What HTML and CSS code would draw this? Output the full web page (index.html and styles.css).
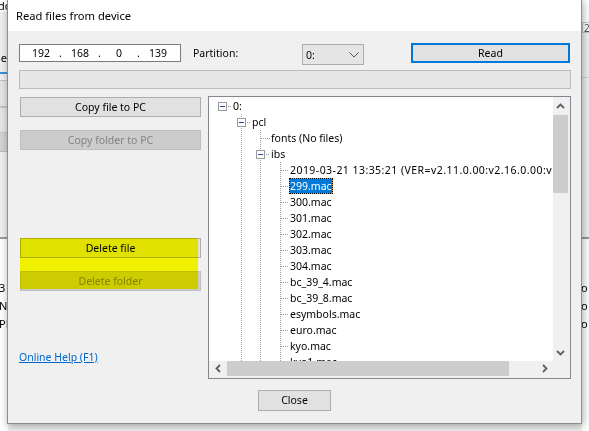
FILE: index.html
```html
<!DOCTYPE html>
<html>
<head>
<meta charset="utf-8">
<title>Read files from device</title>
<link rel="stylesheet" href="styles.css">
</head>
<body>
<div class="bgl">
  <div class="w-top"><span class="clip-l">dd</span></div>
  <div class="g-blk h38"></div>
  <div class="g-txt"><span class="clip-l">le</span></div>
  <div class="g-blk h6"></div>
  <div class="blue"></div>
  <div class="g-blk h6"></div>
  <div class="pbox h27"></div>
  <div class="pbox h26"></div>
  <div class="pbox2"></div>
  <div class="g-fill"></div>
  <div class="sep"></div>
  <div class="w-bot">
    <div class="bt">3</div>
    <div class="bt">N</div>
    <div class="bt">PF</div>
  </div>
</div>
<div class="bgr">
  <div class="w-top r-top"></div>
  <div class="r-cell"><span>2</span></div>
  <div class="g-blk h44"></div>
  <div class="r-line"></div>
  <div class="g-fill"></div>
  <div class="sep"></div>
  <div class="w-bot">
    <div class="bt">o</div>
    <div class="bt">o</div>
    <div class="bt">o</div>
  </div>
</div>

<div class="dialog">
  <div class="titlebar">Read files from device</div>
  <div class="body">
    <div class="row1">
      <div class="ip">
        <span class="oct">192</span><span class="dot">.</span>
        <span class="oct">168</span><span class="dot">.</span>
        <span class="oct">0</span><span class="dot">.</span>
        <span class="oct">139</span>
      </div>
      <span class="lbl">Partition:</span>
      <div class="combo"><span>0:</span><svg width="10" height="6" viewBox="0 0 10 6"><path d="M0.5 0.5 L5 5 L9.5 0.5" fill="none" stroke="#555" stroke-width="1"/></svg></div>
      <div class="btn read">Read</div>
    </div>
    <div class="progress"></div>
    <div class="main">
      <div class="leftcol">
        <div class="btn">Copy file to PC</div>
        <div class="btn dis gap13">Copy folder to PC</div>
        <div class="delgroup">
          <div class="btn">Delete file</div>
          <div class="btn dis gap13">Delete folder</div>
          <div class="hl"></div>
        </div>
        <a class="help" href="#">Online Help (F1)</a>
      </div>
      <div class="tree">
        <div class="view">
          <div class="rows">
            <div class="r l0"><i class="bx"></i><i class="dt"></i><span>0:</span></div>
            <div class="r l1"><i class="bx"></i><i class="dt"></i><span>pcl</span></div>
            <div class="r l2"><i class="ld ld9"></i><span>fonts (No files)</span></div>
            <div class="r l2b"><i class="bx"></i><i class="dt"></i><span>ibs</span></div>
            <div class="r l3"><i class="ld"></i><span class="ver">2019-03-21 13:35:21 (VER=v2.11.0.00:v2.16.0.00:v1.00.00)</span></div>
            <div class="r l3"><i class="ld"></i><span class="sel">299.mac</span></div>
            <div class="r l3"><i class="ld"></i><span>300.mac</span></div>
            <div class="r l3"><i class="ld"></i><span>301.mac</span></div>
            <div class="r l3"><i class="ld"></i><span>302.mac</span></div>
            <div class="r l3"><i class="ld"></i><span>303.mac</span></div>
            <div class="r l3"><i class="ld"></i><span>304.mac</span></div>
            <div class="r l3"><i class="ld"></i><span>bc_39_4.mac</span></div>
            <div class="r l3"><i class="ld"></i><span>bc_39_8.mac</span></div>
            <div class="r l3"><i class="ld"></i><span>esymbols.mac</span></div>
            <div class="r l3"><i class="ld"></i><span>euro.mac</span></div>
            <div class="r l3"><i class="ld"></i><span>kyo.mac</span></div>
            <div class="r l3"><i class="ld"></i><span>kyo1.mac</span></div>
          </div>
        </div>
        <div class="vscroll">
          <div class="arr"><svg width="9" height="6" viewBox="0 0 9 6"><path d="M1 5 L4.5 1.5 L8 5" fill="none" stroke="#606060" stroke-width="1.8"/></svg></div>
          <div class="vtrack"><div class="vthumb"></div></div>
          <div class="arr"><svg width="9" height="6" viewBox="0 0 9 6"><path d="M1 1 L4.5 4.5 L8 1" fill="none" stroke="#606060" stroke-width="1.8"/></svg></div>
        </div>
        <div class="hscroll">
          <div class="harr"><svg width="6" height="9" viewBox="0 0 6 9"><path d="M5 1 L1.5 4.5 L5 8" fill="none" stroke="#606060" stroke-width="1.8"/></svg></div>
          <div class="hthumb"></div>
          <div class="harr end"><svg width="6" height="9" viewBox="0 0 6 9"><path d="M1 1 L4.5 4.5 L1 8" fill="none" stroke="#606060" stroke-width="1.8"/></svg></div>
        </div>
        <div class="corner"></div>
      </div>
    </div>
    <div class="foot"><div class="btn close">Close</div></div>
  </div>
</div>
</body>
</html>
```

FILE: styles.css
```css
* { box-sizing: border-box; }
html, body { margin: 0; padding: 0; }
body {
  width: 589px;
  height: 431px;
  overflow: hidden;
  position: relative;
  background: #f0f0f0;
  font-family: "Noto Sans", "Liberation Sans", sans-serif;
  font-size: 10.5px;
  color: #000;
}

/* ---------- parent window peeking out behind the dialog ---------- */
.bgl, .bgr {
  position: absolute;
  top: 0;
  height: 431px;
  display: flex;
  flex-direction: column;
  overflow: hidden;
  background: #f0f0f0;
}
.bgl { left: 0; width: 8px; }
.bgr { left: 582px; width: 7px; }
.w-top { height: 12px; background: #fff; line-height: 12px; font-size: 11px; white-space: nowrap; }
.r-top { height: 22px; }
.clip-l { display: block; margin-left: -2px; }
.g-blk { flex: none; }
.h38 { height: 38px; }
.h6 { height: 6px; }
.h44 { height: 44px; }
.g-txt { height: 16px; line-height: 16px; font-size: 11px; white-space: nowrap; }
.blue { height: 2px; background: #3a8ee0; flex: none; }
.pbox { flex: none; background: #e6e6e6; border-top: 1px solid #c4c4c4; border-bottom: 1px solid #c4c4c4; }
.h27 { height: 27px; }
.h26 { height: 26px; }
.pbox2 { flex: none; height: 19px; background: #d4d4d4; border-bottom: 1px solid #bdbdbd; }
.r-cell { height: 11px; background: #fff; border: 1px solid #c8c8c8; border-right: 0; line-height: 10px; font-size: 10px; color: #555; padding-left: 1px; }
.r-line { height: 1px; background: #d0d0d0; flex: none; }
.g-fill { flex: 1; }
.sep { height: 2px; background: #9a9a9a; flex: none; }
.w-bot { height: 192px; background: #fff; padding-top: 40px; flex: none; }
.bt { height: 18px; line-height: 18px; font-size: 11px; white-space: nowrap; margin-left: -1px; }

/* ---------- dialog window ---------- */
.dialog {
  position: absolute;
  left: 7px;
  top: -1px;
  width: 575px;
  height: 425px;
  border: 1px solid #8e8e8e;
  background: #f0f0f0;
  box-shadow: 1px 2px 8px rgba(0, 0, 0, 0.35);
}
.titlebar {
  height: 31px;
  background: #fff;
  line-height: 32px;
  padding-left: 8px;
  font-size: 11.2px;
}
.body {
  padding: 12px 10px 0 11px;
  display: flex;
  flex-direction: column;
}

.row1 {
  display: flex;
  align-items: flex-start;
  height: 21px;
}
.ip {
  margin-top: 1px;
  width: 162px;
  height: 18px;
  border: 1px solid #7a7a7a;
  background: #fff;
  display: flex;
  align-items: center;
  padding-left: 4px;
  line-height: 16px;
}
.oct { width: 34px; text-align: center; }
.dot { width: 5px; text-align: center; }
.lbl {
  margin-left: 12px;
  width: 109px;
  line-height: 20px;
}
.combo {
  margin-top: 1px;
  width: 62px;
  height: 21px;
  border: 1px solid #adadad;
  background: #e5e5e5;
  display: flex;
  align-items: center;
  justify-content: space-between;
  padding: 0 4px 0 3px;
}
.combo svg { margin-top: 1px; }

.btn {
  height: 20px;
  border: 1px solid #adadad;
  background: #e1e1e1;
  text-align: center;
  line-height: 18px;
  white-space: nowrap;
}
.btn.read {
  margin-left: 47px;
  width: 159px;
  border: 2px solid #0078d7;
  line-height: 16px;
}
.btn.dis {
  background: #cccccc;
  border-color: #bfbfbf;
  color: #838383;
}
.gap13 { margin-top: 13px; }

.progress {
  margin-top: 6px;
  height: 19px;
  border: 1px solid #bcbcbc;
  background: #e6e6e6;
}

.main {
  margin-top: 7px;
  height: 283px;
  display: flex;
}
.leftcol {
  width: 181px;
  margin-left: 1px;
  padding-top: 1px;
  display: flex;
  flex-direction: column;
}
.delgroup {
  margin-top: 88px;
  position: relative;
  display: flex;
  flex-direction: column;
}
.hl {
  position: absolute;
  left: 0;
  top: 0;
  width: 178px;
  height: 51px;
  background: #ffff00;
  mix-blend-mode: multiply;
  pointer-events: none;
}
.help {
  margin-top: 58px;
  margin-left: -1px;
  line-height: 16px;
  color: #0066cc;
  text-decoration: underline;
  align-self: flex-start;
}

/* ---------- tree view ---------- */
.tree {
  margin-left: 7px;
  width: 363px;
  height: 283px;
  border: 1px solid #828790;
  background: #fff;
  display: grid;
  grid-template-columns: 1fr 17px;
  grid-template-rows: 1fr 17px;
  overflow: hidden;
}
.view {
  overflow: hidden;
  position: relative;
}
.rows {
  padding-top: 1px;
  min-height: 100%;
  background-image:
    repeating-linear-gradient(to bottom, #a0a0a0 0 1px, transparent 1px 2px),
    repeating-linear-gradient(to bottom, #a0a0a0 0 1px, transparent 1px 2px),
    repeating-linear-gradient(to bottom, #a0a0a0 0 1px, transparent 1px 2px);
  background-size: 1px 100%, 1px 100%, 1px 100%;
  background-position: 32px 17px, 51px 33px, 71px 65px;
  background-repeat: no-repeat;
}
.r {
  display: flex;
  align-items: center;
  height: 16px;
  line-height: 16px;
  white-space: nowrap;
}
.l0 { padding-left: 9px; }
.l1 { padding-left: 28px; }
.l2b { padding-left: 47px; }
.l2 { padding-left: 52px; }
.l3 { padding-left: 72px; }
.ver { letter-spacing: 0.45px; }
.bx {
  flex: none;
  position: relative;
  width: 9px;
  height: 9px;
  border: 1px solid #9a9a9a;
  background: #fff;
}
.bx::after {
  content: "";
  position: absolute;
  left: 1px;
  top: 3px;
  width: 5px;
  height: 1px;
  background: #23469a;
}
.dt, .ld {
  flex: none;
  height: 1px;
  background: repeating-linear-gradient(to right, #a0a0a0 0 1px, transparent 1px 2px);
}
.dt { width: 4px; margin: 0 1px; }
.ld { width: 8px; margin-right: 1px; }
.ld.ld9 { width: 9px; }
.sel {
  margin-left: -1px;
  padding: 0 1px;
  height: 16px;
  line-height: 16px;
  background: #0078d7;
  color: #fff;
  box-shadow: inset 0 0 0 1px #f39a3a;
  outline: 1px dotted #000;
  outline-offset: -1px;
}

.vscroll {
  background: #f0f0f0;
  display: flex;
  flex-direction: column;
}
.arr {
  height: 17px;
  width: 15px;
  display: flex;
  align-items: center;
  justify-content: center;
  flex: none;
}
.vtrack { flex: 1; }
.vthumb {
  margin-top: 1px;
  width: 15px;
  height: 78px;
  background: #cdcdcd;
}
.hscroll {
  background: #f0f0f0;
  display: flex;
}
.harr {
  width: 17px;
  height: 15px;
  display: flex;
  align-items: center;
  justify-content: center;
  flex: none;
}
.harr.end { margin-left: auto; }
.hthumb {
  margin-left: 1px;
  width: 282px;
  height: 15px;
  background: #cdcdcd;
}
.corner { background: #f0f0f0; }

.foot {
  margin-top: 11px;
  display: flex;
  justify-content: center;
}
.btn.close {
  width: 73px;
  height: 21px;
  line-height: 19px;
  margin-left: -1px;
}
```
